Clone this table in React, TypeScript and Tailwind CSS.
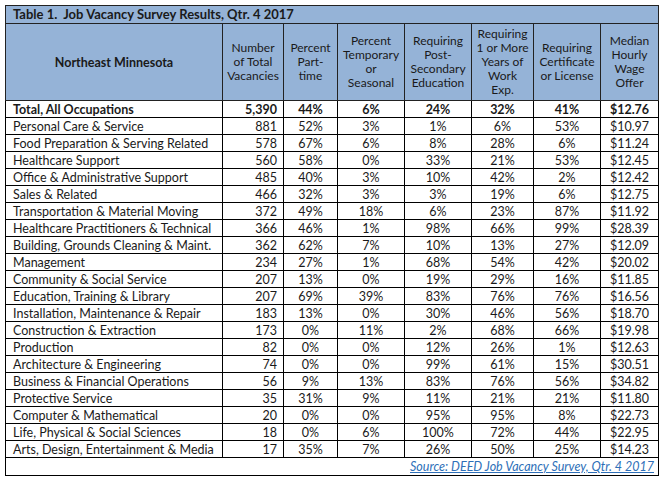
import React from "react";

type Row = [string, string, string, string, string, string, string, string];

const rows: Row[] = [
  ["Personal Care & Service", "881", "52%", "3%", "1%", "6%", "53%", "$10.97"],
  ["Food Preparation & Serving Related", "578", "67%", "6%", "8%", "28%", "6%", "$11.24"],
  ["Healthcare Support", "560", "58%", "0%", "33%", "21%", "53%", "$12.45"],
  ["Office & Administrative Support", "485", "40%", "3%", "10%", "42%", "2%", "$12.42"],
  ["Sales & Related", "466", "32%", "3%", "3%", "19%", "6%", "$12.75"],
  ["Transportation & Material Moving", "372", "49%", "18%", "6%", "23%", "87%", "$11.92"],
  ["Healthcare Practitioners & Technical", "366", "46%", "1%", "98%", "66%", "99%", "$28.39"],
  ["Building, Grounds Cleaning & Maint.", "362", "62%", "7%", "10%", "13%", "27%", "$12.09"],
  ["Management", "234", "27%", "1%", "68%", "54%", "42%", "$20.02"],
  ["Community & Social Service", "207", "13%", "0%", "19%", "29%", "16%", "$11.85"],
  ["Education, Training & Library", "207", "69%", "39%", "83%", "76%", "76%", "$16.56"],
  ["Installation, Maintenance & Repair", "183", "13%", "0%", "30%", "46%", "56%", "$18.70"],
  ["Construction & Extraction", "173", "0%", "11%", "2%", "68%", "66%", "$19.98"],
  ["Production", "82", "0%", "0%", "12%", "26%", "1%", "$12.63"],
  ["Architecture & Engineering", "74", "0%", "0%", "99%", "61%", "15%", "$30.51"],
  ["Business & Financial Operations", "56", "9%", "13%", "83%", "76%", "56%", "$34.82"],
  ["Protective Service", "35", "31%", "9%", "11%", "21%", "21%", "$11.80"],
  ["Computer & Mathematical", "20", "0%", "0%", "95%", "95%", "8%", "$22.73"],
  ["Life, Physical & Social Sciences", "18", "0%", "6%", "100%", "72%", "44%", "$22.95"],
  ["Arts, Design, Entertainment & Media", "17", "35%", "7%", "26%", "50%", "25%", "$14.23"],
];

const headers = [
  ["Number", "of Total", "Vacancies"],
  ["Percent", "Part-", "time"],
  ["Percent", "Temporary", "or", "Seasonal"],
  ["Requiring", "Post-", "Secondary", "Education"],
  ["Requiring", "1 or More", "Years of", "Work", "Exp."],
  ["Requiring", "Certificate", "or License"],
  ["Median", "Hourly", "Wage", "Offer"],
];

const widths = ["w-[217px]", "w-[61px]", "w-[54px]", "w-[67px]", "w-[67px]", "w-[62px]", "w-[67px]", "w-[58px]"];

const DataRow = ({ row, bold }: { row: Row; bold?: boolean }) => (
  <tr className={`h-[17px] ${bold ? "font-bold" : ""}`}>
    <td className="border border-black pl-[7px] text-left whitespace-nowrap">{row[0]}</td>
    <td className="border border-black pr-[6px] text-right">{row[1]}</td>
    {row.slice(2).map((v, i) => (
      <td key={i} className="border border-black text-center">
        {v}
      </td>
    ))}
  </tr>
);

export default function App() {
  return (
    <div className="w-[664px] h-[481px] bg-white pt-[5px] pl-[5px] text-[#1a1a1a] font-['Lato','Open_Sans',sans-serif] text-[12.5px] leading-[15px]">
      <table className="table-fixed border-collapse border border-black w-[653px]">
        <colgroup>
          {widths.map((w, i) => (
            <col key={i} className={w} />
          ))}
        </colgroup>
        <thead>
          <tr className="h-[18px] bg-[#95b3d7]">
            <th colSpan={8} className="border border-[#222] pl-[7px] text-left font-bold whitespace-pre text-[13px]">
              {"Table 1.  Job Vacancy Survey Results, Qtr. 4 2017"}
            </th>
          </tr>
          <tr className="h-[77px] bg-[#95b3d7]">
            <th className="border border-[#222] font-bold text-center">Northeast Minnesota</th>
            {headers.map((lines, i) => (
              <th key={i} className="border border-[#222] font-normal text-center text-[12px] leading-[14px]">
                {lines.map((l, j) => (
                  <div key={j}>{l}</div>
                ))}
              </th>
            ))}
          </tr>
        </thead>
        <tbody>
          <DataRow row={["Total, All Occupations", "5,390", "44%", "6%", "24%", "32%", "41%", "$12.76"]} bold />
          {rows.map((r) => (
            <DataRow key={r[0]} row={r} />
          ))}
          <tr className="h-[18px]">
            <td colSpan={8} className="border border-black text-right pr-[4px]">
              <span className="italic underline text-[#2e6fb8]">Source: DEED Job Vacancy Survey, Qtr. 4 2017</span>
            </td>
          </tr>
        </tbody>
      </table>
    </div>
  );
}
